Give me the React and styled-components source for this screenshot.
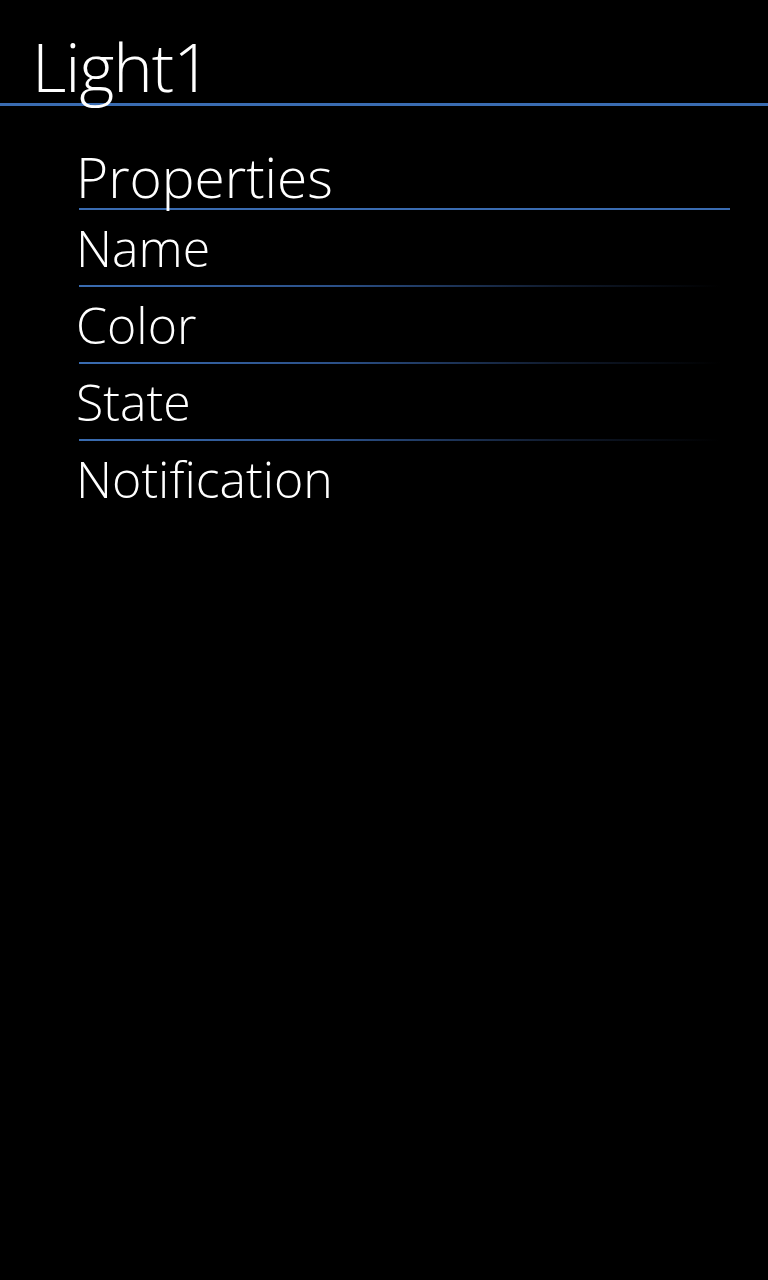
import React from 'react';
import styled, { createGlobalStyle } from 'styled-components';

const GlobalStyle = createGlobalStyle`
  html, body {
    margin: 0;
    padding: 0;
    background: #000;
  }
  body {
    font-family: "Open Sans", "Noto Sans", sans-serif;
    font-weight: 300;
    color: #fff;
  }
`;

const Page = styled.div`
  width: 768px;
  height: 1280px;
  background: #000;
  overflow: hidden;
`;

const Header = styled.header`
  height: 103px;
  border-bottom: 3px solid #3a6cb1;
  box-sizing: content-box;
  padding-left: 32px;
  display: flex;
  align-items: flex-end;
`;

const Title = styled.h1`
  margin: 0;
  font-size: 67px;
  font-weight: 300;
  line-height: 1;
  letter-spacing: -1px;
  transform: translateY(-3px);
`;

const Section = styled.section`
  padding: 40px 38px 0 79px;
  display: flex;
  flex-direction: column;
`;

const SectionTitle = styled.h2`
  margin: 0;
  font-size: 55px;
  font-weight: 300;
  line-height: 62px;
  text-indent: -3px;
  border-bottom: 2px solid #3a6cb1;
`;

const List = styled.ul`
  list-style: none;
  margin: 0;
  padding: 0;
  display: flex;
  flex-direction: column;
`;

const Item = styled.li`
  font-size: 50px;
  line-height: 60px;
  height: 77px;
  text-indent: -3px;
  position: relative;
  padding-top: 8px;
  box-sizing: border-box;

  &::after {
    content: '';
    display: ${p => (p.$last ? 'none' : 'block')};
    position: absolute;
    left: 0;
    right: 10px;
    bottom: 0;
    height: 2px;
    background: linear-gradient(90deg, #3a6cb1 0%, #2b5088 40%, #101a2c 75%, #000 100%);
  }
`;

const items = ['Name', 'Color', 'State', 'Notification'];

export default function App() {
  return (
    <Page>
      <GlobalStyle />
      <Header>
        <Title>Light1</Title>
      </Header>
      <Section>
        <SectionTitle>Properties</SectionTitle>
        <List>
          {items.map((it, i) => (
            <Item key={it} $last={i === items.length - 1}>{it}</Item>
          ))}
        </List>
      </Section>
    </Page>
  );
}
